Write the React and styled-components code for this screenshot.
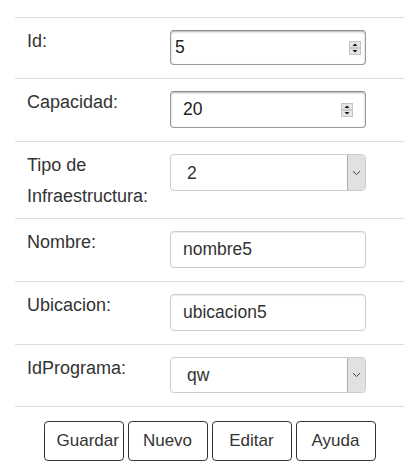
import React from 'react'
import styled, { createGlobalStyle } from 'styled-components'

const GlobalStyle = createGlobalStyle`
  body {
    margin: 0;
    background: #fff;
    font-family: "Liberation Sans", Arial, sans-serif;
    color: #333;
  }
`

const Form = styled.div`
  margin-left: 15px;
  padding-top: 17px;
`

const Row = styled.div`
  display: grid;
  grid-template-columns: 143px 1fr;
  border-top: 1px solid #ddd;
`

const Label = styled.div`
  padding: 8px 12px 6px;
  font-size: 18px;
  line-height: 31px;
  color: #333;
`

const Field = styled.div`
  padding: 12px 12px 13px;
`

const Box = styled.div`
  box-sizing: border-box;
  width: 196px;
  height: ${p => p.$h || 37}px;
  display: flex;
  align-items: center;
  border: 1px solid ${p => (p.$dark ? '#9a9a9a' : '#ccc')};
  border-top-color: ${p => (p.$dark ? '#8a8a8a' : '#ccc')};
  border-radius: 4px;
  box-shadow: ${p =>
    p.$dark ? 'inset 0 1px 2px rgba(0,0,0,.3)' : 'inset 0 1px 1px rgba(0,0,0,.075)'};
  padding: 0 ${p => p.$pad ?? 12}px;
  background: #fff;
  overflow: hidden;
`

const TextInput = styled.input`
  flex: 1;
  min-width: 0;
  border: none;
  outline: none;
  padding: 0;
  background: transparent;
  font-family: inherit;
  font-size: 17.5px;
  color: ${p => (p.$dark ? '#222' : '#333')};
`

const SelectBox = styled.div`
  box-sizing: border-box;
  width: 196px;
  height: ${p => p.$h || 37}px;
  display: flex;
  border: 1px solid #ccc;
  border-radius: 4px;
  overflow: hidden;
  background: #fff;
`

const Select = styled.select`
  flex: 1;
  appearance: none;
  border: none;
  outline: none;
  background: transparent;
  padding: 0 0 0 16px;
  font-family: inherit;
  font-size: 17.5px;
  color: #333;
`

const ArrowBox = styled.div`
  width: 17px;
  display: flex;
  align-items: center;
  justify-content: center;
  background: #e1e1e1;
  border-left: 1px solid #adadad;
`

const Buttons = styled.div`
  display: flex;
  justify-content: center;
  gap: 4px;
  border-top: 1px solid #ddd;
  padding-top: 14px;
`

const Button = styled.button`
  box-sizing: border-box;
  width: 80px;
  height: 40px;
  padding: 0 12px;
  background: #fff;
  border: 1px solid #333;
  border-radius: 4px;
  font-family: inherit;
  font-size: 17px;
  color: #333;
  white-space: nowrap;
  text-align: center;
`

const Spinner = () => (
  <svg width="12" height="14" viewBox="0 0 12 14">
    <rect x="0.5" y="0.5" width="11" height="13" fill="#e6e6e6" stroke="#c4c4c4" />
    <line x1="1" y1="7" x2="11" y2="7" stroke="#b0b0b0" />
    <polygon points="3.5,5 8.5,5 6,2.5" fill="#111" />
    <polygon points="3.5,9 8.5,9 6,11.5" fill="#111" />
  </svg>
)

const Chevron = () => (
  <svg width="9" height="6" viewBox="0 0 9 6">
    <polyline points="1,1.2 4.5,4.5 8,1.2" fill="none" stroke="#444" strokeWidth="1" />
  </svg>
)

function NumberField({ value, pad, h }) {
  return (
    <Box $dark $pad={pad} $h={h}>
      <TextInput $dark defaultValue={value} />
      <Spinner />
    </Box>
  )
}

function SelectField({ value, h }) {
  return (
    <SelectBox $h={h}>
      <Select defaultValue={value}>
        <option value={value}>{value}</option>
      </Select>
      <ArrowBox>
        <Chevron />
      </ArrowBox>
    </SelectBox>
  )
}

function TextField({ value, h }) {
  return (
    <Box $h={h}>
      <TextInput defaultValue={value} />
    </Box>
  )
}

export default function App() {
  return (
    <>
      <GlobalStyle />
      <Form>
        <Row>
          <Label>Id:</Label>
          <Field><NumberField value="5" pad={4} h={35} /></Field>
        </Row>
        <Row>
          <Label>Capacidad:</Label>
          <Field><NumberField value="20" pad={12} /></Field>
        </Row>
        <Row>
          <Label>Tipo de Infraestructura:</Label>
          <Field><SelectField value="2" /></Field>
        </Row>
        <Row>
          <Label>Nombre:</Label>
          <Field><TextField value="nombre5" /></Field>
        </Row>
        <Row>
          <Label>Ubicacion:</Label>
          <Field><TextField value="ubicacion5" /></Field>
        </Row>
        <Row>
          <Label>IdPrograma:</Label>
          <Field><SelectField value="qw" h={36} /></Field>
        </Row>
        <Buttons>
          <Button>Guardar</Button>
          <Button>Nuevo</Button>
          <Button>Editar</Button>
          <Button>Ayuda</Button>
        </Buttons>
      </Form>
    </>
  )
}
